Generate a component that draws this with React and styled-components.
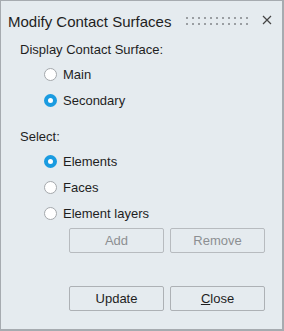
import React from 'react'
import styled, { createGlobalStyle } from 'styled-components'

const Global = createGlobalStyle`
	html, body {
		margin: 0;
		padding: 0;
		background: #e5ebef;
	}
	body {
		font-family: "Liberation Sans", Arial, sans-serif;
		color: #1e1e1e;
	}
`

const Window = styled.div`
	box-sizing: border-box;
	width: 284px;
	height: 331px;
	background: #e5ebef;
	border: 1px solid #a6abb0;
	border-right-width: 2px;
	border-bottom-width: 2px;
	display: flex;
	flex-direction: column;
`

const Header = styled.div`
	height: 39px;
	display: flex;
	align-items: center;
	padding: 0 10px 0 7px;
`

const Title = styled.div`
	font-size: 15px;
	line-height: 18px;
	padding-top: 3px;
	flex: 1;
`

const Grip = styled.div`
	display: grid;
	grid-template-columns: repeat(11, 2px);
	column-gap: 4px;
	row-gap: 4px;
	margin-right: 14px;
	margin-top: 0px;
`

const Dot = styled.span`
	width: 2px;
	height: 2px;
	background: #9a9ea2;
`

const CloseX = styled.svg`
	width: 10px;
	height: 10px;
	margin-top: -1px;
`

const Body = styled.div`
	padding-left: 19px;
	padding-right: 17px;
	display: flex;
	flex-direction: column;
`

const Label = styled.div`
	font-size: 13px;
	line-height: 20px;
	height: 20px;
	margin-top: ${p => p.top || 0}px;
	margin-bottom: 1px;
`

const RadioRow = styled.label`
	height: 26px;
	display: flex;
	align-items: center;
	padding-left: 24px;
	font-size: 13px;
	gap: 6px;
`

const Circle = styled.span`
	box-sizing: border-box;
	width: 13px;
	height: 13px;
	border-radius: 50%;
	background: ${p => (p.checked ? '#ffffff' : '#ffffff')};
	border: ${p => (p.checked ? '4px solid #1a9be0' : '1px solid #a4a8ac')};
`

const ButtonRow = styled.div`
	display: flex;
	justify-content: flex-end;
	gap: 6px;
	margin-top: ${p => p.top}px;
`

const Button = styled.button`
	box-sizing: border-box;
	width: 95px;
	height: 25px;
	padding: 0;
	font-family: "Liberation Sans", Arial, sans-serif;
	font-size: 13px;
	color: ${p => (p.disabled ? '#8c8f92' : '#1e1e1e')};
	background: #e5ebef;
	border: 1px solid ${p => (p.disabled ? '#b7bbbf' : '#adb1b5')};
	border-radius: 2px;
`

const Radio = ({ checked, children }) => (
	<RadioRow>
		<Circle checked={checked} />
		<span>{children}</span>
	</RadioRow>
)

const App = () => (
	<>
		<Global />
		<Window>
			<Header>
				<Title>Modify Contact Surfaces</Title>
				<Grip>
					{Array.from({ length: 22 }).map((_, i) => <Dot key={i} />)}
				</Grip>
				<CloseX viewBox="0 0 10 10">
					<path d="M1 1 L9 9 M9 1 L1 9" stroke="#444" strokeWidth="1.2" fill="none" />
				</CloseX>
			</Header>
			<Body>
				<Label>Display Contact Surface:</Label>
				<Radio>Main</Radio>
				<Radio checked>Secondary</Radio>
				<Label top={14}>Select:</Label>
				<Radio checked>Elements</Radio>
				<Radio>Faces</Radio>
				<Radio>Element layers</Radio>
				<ButtonRow top={2}>
					<Button disabled>Add</Button>
					<Button disabled>Remove</Button>
				</ButtonRow>
				<ButtonRow top={33}>
					<Button>Update</Button>
					<Button><u>C</u>lose</Button>
				</ButtonRow>
			</Body>
		</Window>
	</>
)

export default App
